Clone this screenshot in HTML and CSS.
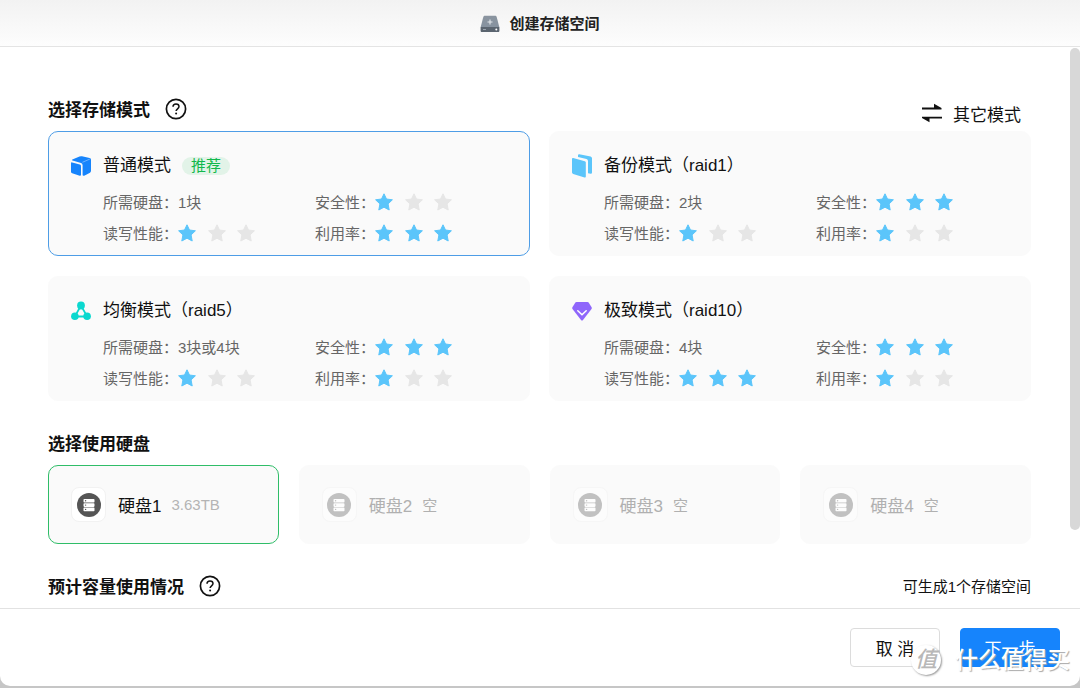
FILE: index.html
```html
<!DOCTYPE html>
<html lang="zh-CN">
<head>
<meta charset="utf-8">
<title>创建存储空间</title>
<link rel="stylesheet" href="styles.css">
</head>
<body>
<svg class="defs" aria-hidden="true">
  <symbol id="star" viewBox="0 0 18 18"><path d="M9 .8 11.5 6 17.4 6.8 13.1 10.9 14.2 17 9 14.200 3.800 17 4.900 10.900 .6 6.800 6.500 6Z" stroke="currentColor" stroke-width="1" stroke-linejoin="round" fill="currentColor"/></symbol>
  <symbol id="help" viewBox="0 0 22 22"><circle cx="11" cy="11" r="9.600" fill="none" stroke="#111" stroke-width="1.700"/><path d="M8 8.700C8 6.900 9.300 5.900 11 5.900s3 1.100 3 2.700c0 2.200-2.900 2.300-2.900 4.500" fill="none" stroke="#111" stroke-width="1.500"/><circle cx="11.100" cy="15.600" r="1" fill="#111"/></symbol>
  <symbol id="disk" viewBox="0 0 24 24"><circle cx="12" cy="12" r="12" fill="#555"/><g fill="#fff"><rect x="6.500" y="6" width="11" height="3.600" rx=".8"/><rect x="6.500" y="10.300" width="11" height="3.600" rx=".8"/><rect x="6.500" y="14.600" width="11" height="3.600" rx=".8"/></g><g fill="#555"><circle cx="8.600" cy="7.800" r=".7"/><circle cx="8.600" cy="12.100" r=".7"/><circle cx="8.600" cy="16.400" r=".7"/></g></symbol>
</svg>
<div class="window">
  <header class="titlebar">
    <svg class="title-icon" viewBox="0 0 20 18" aria-hidden="true">
      <defs><linearGradient id="metal" x1="0" y1="0" x2="0" y2="1"><stop offset="0" stop-color="#8a949f"/><stop offset="1" stop-color="#8793a0"/></linearGradient></defs>
      <path d="M5 .8h10c.9 0 1.400.4 1.700 1.200L19.300 12H.7L3.300 2C3.600 1.200 4.100.8 5 .8Z" fill="url(#metal)"/>
      <path d="M.6 12h18.800v3.800c0 .8-.5 1.300-1.300 1.300H1.900c-.8 0-1.300-.5-1.300-1.300Z" fill="#5b6570"/>
      <path d="M10 4.500v5M7.500 7h5" stroke="#e4e8ec" stroke-width="1.100"/>
      <path d="M3 14.500h3" stroke="#9aa3ad"/><circle cx="16.300" cy="14.500" r="1" fill="#fff"/>
    </svg>
    <h1>创建存储空间</h1>
  </header>

  <div class="viewport">
    <main class="content">
      <section>
        <div class="section-head">
          <h2>选择存储模式</h2>
          <button class="help" type="button" aria-label="存储模式说明"><svg><use href="#help"/></svg></button>
          <button class="other" type="button">
            <svg viewBox="0 0 22 20" aria-hidden="true"><path d="M1 4.600h12V.8l7.500 4.300v1.300H1ZM21 15.600H8.500v3.700L1 15.100v-1.300h20Z" fill="#111"/></svg>
            其它模式
          </button>
        </div>
        <div class="modes">
          <label class="card mode">
            <input class="pick" type="radio" name="mode" checked>
            <span class="mode-head">
              <svg class="mode-icon" viewBox="0 0 20 20" aria-hidden="true"><path d="M1.400 3.500 8.500.5Q9.700 0 11 .3L18.600 2Q20 2.400 20 3.700V14.800Q20 16 19 16.700L13.200 19.700Q11.600 20.300 11.600 18.700V9.300Q11.600 7.600 10 7L1.500 4.600Q.5 4.100 1.400 3.500Z" fill="#1684fc"/><path d="M1.200 6.400 8.800 8.600Q10 9 10 10.200V18.700Q10 20 8.700 19.700L1.200 17.300Q0 16.900 0 15.700V7.300Q0 6.100 1.200 6.400Z" fill="#1684fc"/><path d="M11.400 6.300 18.800 3.100" stroke="#7fbcff" stroke-width=".8"/></svg>
              <span class="mode-name">普通模式</span><span class="tag">推荐</span>
            </span>
            <span class="metrics">
              <span class="metric">所需硬盘：1块</span>
              <span class="metric">安全性：<span class="stars"><svg class="on"><use href="#star"/></svg><svg><use href="#star"/></svg><svg><use href="#star"/></svg></span></span>
              <span class="metric">读写性能：<span class="stars"><svg class="on"><use href="#star"/></svg><svg><use href="#star"/></svg><svg><use href="#star"/></svg></span></span>
              <span class="metric">利用率：<span class="stars"><svg class="on"><use href="#star"/></svg><svg class="on"><use href="#star"/></svg><svg class="on"><use href="#star"/></svg></span></span>
            </span>
          </label>
          <label class="card mode">
            <input class="pick" type="radio" name="mode">
            <span class="mode-head">
              <svg class="mode-icon tall" viewBox="0 0 20 24" aria-hidden="true"><g fill="#5bc5fa"><path d="M1.200 4 12.800 7.300Q13.800 7.600 13.800 8.600V22.500Q13.800 23.800 12.600 23.500L1.200 19.900Q0 19.500 0 18.500V5Q0 3.700 1.200 4Z"/><path d="M7.300.2 18.600 2.600Q20 3 20 4.300V18.500Q20 20 18.600 19.800L16 19.200V7Q16 5.500 14.500 5.100L6 3V1.200Q6.100 0 7.300.2Z"/></g></svg>
              <span class="mode-name">备份模式（raid1）</span>
            </span>
            <span class="metrics">
              <span class="metric">所需硬盘：2块</span>
              <span class="metric">安全性：<span class="stars"><svg class="on"><use href="#star"/></svg><svg class="on"><use href="#star"/></svg><svg class="on"><use href="#star"/></svg></span></span>
              <span class="metric">读写性能：<span class="stars"><svg class="on"><use href="#star"/></svg><svg><use href="#star"/></svg><svg><use href="#star"/></svg></span></span>
              <span class="metric">利用率：<span class="stars"><svg class="on"><use href="#star"/></svg><svg><use href="#star"/></svg><svg><use href="#star"/></svg></span></span>
            </span>
          </label>
          <label class="card mode">
            <input class="pick" type="radio" name="mode">
            <span class="mode-head">
              <svg class="mode-icon" viewBox="0 0 20 20" aria-hidden="true"><path d="M10 4.500 3.800 15.500H16.200Z" fill="none" stroke="#0bd8cf" stroke-width="1.800"/><g fill="#0bd8cf"><circle cx="10" cy="4.500" r="3.900"/><circle cx="3.900" cy="15.300" r="3.800"/><circle cx="16.100" cy="15.300" r="3.800"/></g></svg>
              <span class="mode-name">均衡模式（raid5）</span>
            </span>
            <span class="metrics">
              <span class="metric">所需硬盘：3块或4块</span>
              <span class="metric">安全性：<span class="stars"><svg class="on"><use href="#star"/></svg><svg class="on"><use href="#star"/></svg><svg class="on"><use href="#star"/></svg></span></span>
              <span class="metric">读写性能：<span class="stars"><svg class="on"><use href="#star"/></svg><svg><use href="#star"/></svg><svg><use href="#star"/></svg></span></span>
              <span class="metric">利用率：<span class="stars"><svg class="on"><use href="#star"/></svg><svg><use href="#star"/></svg><svg><use href="#star"/></svg></span></span>
            </span>
          </label>
          <label class="card mode">
            <input class="pick" type="radio" name="mode">
            <span class="mode-head">
              <svg class="mode-icon" viewBox="0 0 20 20" aria-hidden="true"><path d="M4.500 1h11q.8 0 1.300.7l2.800 4.600q.5.9-.1 1.700L11 19q-1 1.100-2 0L.5 8Q-.1 7.200.4 6.300L3.200 1.700Q3.700 1 4.500 1Z" fill="#8f66fb"/><path d="M5.800 9.700 10 13.700 14.200 9.700" fill="none" stroke="#fff" stroke-width="1.500" stroke-linecap="round"/></svg>
              <span class="mode-name">极致模式（raid10）</span>
            </span>
            <span class="metrics">
              <span class="metric">所需硬盘：4块</span>
              <span class="metric">安全性：<span class="stars"><svg class="on"><use href="#star"/></svg><svg class="on"><use href="#star"/></svg><svg class="on"><use href="#star"/></svg></span></span>
              <span class="metric">读写性能：<span class="stars"><svg class="on"><use href="#star"/></svg><svg class="on"><use href="#star"/></svg><svg class="on"><use href="#star"/></svg></span></span>
              <span class="metric">利用率：<span class="stars"><svg class="on"><use href="#star"/></svg><svg><use href="#star"/></svg><svg><use href="#star"/></svg></span></span>
            </span>
          </label>
        </div>
      </section>

      <section>
        <div class="section-head"><h2>选择使用硬盘</h2></div>
        <div class="disks">
          <label class="card disk"><input class="pick" type="checkbox" checked><span class="tile"><svg><use href="#disk"/></svg></span><span class="disk-name">硬盘1</span><span class="disk-size">3.63TB</span></label>
          <label class="card disk empty"><input class="pick" type="checkbox" disabled><span class="tile"><svg><use href="#disk"/></svg></span><span class="disk-name">硬盘2</span><span class="disk-size">空</span></label>
          <label class="card disk empty"><input class="pick" type="checkbox" disabled><span class="tile"><svg><use href="#disk"/></svg></span><span class="disk-name">硬盘3</span><span class="disk-size">空</span></label>
          <label class="card disk empty"><input class="pick" type="checkbox" disabled><span class="tile"><svg><use href="#disk"/></svg></span><span class="disk-name">硬盘4</span><span class="disk-size">空</span></label>
        </div>
      </section>

      <section>
        <div class="section-head">
          <h2>预计容量使用情况</h2>
          <button class="help" type="button" aria-label="容量说明"><svg><use href="#help"/></svg></button>
          <span class="note">可生成1个存储空间</span>
        </div>
      </section>
    </main>
    <div class="scrollbar"><div class="thumb"></div></div>
  </div>

  <footer class="actions">
    <button class="btn" type="button">取 消</button>
    <button class="btn primary" type="button">下一步</button>
  </footer>
  <div class="watermark"><span class="badge">值</span><span>什么值得买</span></div>
</div>
</body>
</html>
```
FILE: styles.css
```css
* { box-sizing: border-box; }

body {
  margin: 0;
  background: #c6c6c6;
  color: #111;
  font-family: "Liberation Sans", "Noto Sans CJK SC", sans-serif;
  font-size: 15px;
}

button {
  padding: 0;
  border: 0;
  background: none;
  color: inherit;
  font: inherit;
}

svg { display: block; flex: none; }
.defs { position: absolute; width: 0; height: 0; }

.window {
  position: relative;
  display: flex;
  flex-direction: column;
  height: calc(100vh - 2px);
  overflow: hidden;
  background: #fff;
  border-radius: 0 0 10px 10px;
}

.titlebar {
  display: flex;
  flex: none;
  align-items: center;
  justify-content: center;
  gap: 9px;
  height: 47px;
  padding-top: 1px;
  border-bottom: 1px solid #e4e4e4;
  background: linear-gradient(#f2f2f2, #fdfdfd);
}
.title-icon { width: 20px; height: 18px; }
h1 { margin: 0; font-size: 15px; line-height: 24px; color: #222; }

.viewport { display: flex; flex: 1; min-height: 0; }
.content {
  flex: 1;
  min-width: 0;
  padding: 48px 39px 0 48px;
  overflow: hidden;
}
.content section + section { margin-top: 28px; }
.scrollbar { flex: none; width: 10px; padding-top: 1px; }
.thumb { height: 86%; border-radius: 5px; background: #d8d8d8; }

.section-head { display: flex; height: 36px; align-items: flex-start; }
h2 { margin: 0; font-size: 17px; line-height: 31px; }
.help { margin: 3px 0 0 15px; }
.help svg { width: 22px; height: 22px; }
.other {
  display: flex;
  align-items: center;
  gap: 10px;
  height: 36px;
  margin-left: auto;
  margin-right: 10px;
  font-size: 17px;
}
.other svg { width: 22px; height: 20px; }
.note { margin-left: auto; line-height: 30px; }

.card { border: 1px solid #fafafa; border-radius: 10px; background: #fafafa; }
.pick { appearance: none; position: absolute; width: 0; height: 0; margin: 0; }

.modes { display: grid; grid-template-columns: 1fr 1fr; gap: 20px 19px; }
.mode { padding: 22px 22px 7px; }
.mode:has(:checked) { border-color: #4e9de6; }
.mode-head { display: flex; align-items: center; gap: 12px; height: 24px; }
.mode-icon { width: 20px; height: 20px; }
.mode-icon.tall { height: 24px; }
.mode-name { font-size: 17px; line-height: 24px; }
.tag {
  margin-left: -1px;
  padding: 0 9px;
  border-radius: 9px;
  background: #e2f3e8;
  color: #12b84c;
  line-height: 18px;
}
.metrics {
  display: grid;
  grid-template-columns: 212px 1fr;
  margin: 8px 0 0 32px;
  color: #666;
}
.metric { display: flex; align-items: center; height: 31px; }
.stars { display: flex; justify-content: space-between; width: 77px; color: #e6e6e6; }
.stars svg { width: 18px; height: 18px; }
.stars .on { color: #5bc5fa; }

.disks { display: grid; grid-template-columns: repeat(4, 1fr); gap: 20px; }
.disk { display: flex; align-items: center; padding: 21px 22px; }
.disk:has(:checked) { border-color: #2fbd68; }
.tile {
  display: grid;
  place-items: center;
  width: 35px;
  height: 35px;
  margin-right: 12px;
  border: 1px solid #f2f2f2;
  border-radius: 8px;
  background: #fff;
}
.tile svg { width: 24px; height: 24px; }
.disk-name { margin-right: 10px; font-size: 17px; }
.disk-size { color: #b4b4b4; }
.empty .tile { border-color: #f6f6f6; background: #fcfcfc; }
.empty .tile svg { opacity: 0.35; }
.empty .disk-name, .empty .disk-size { color: #b0b0b0; }

.actions {
  display: flex;
  flex: none;
  justify-content: flex-end;
  gap: 20px;
  padding: 19px 20px;
  border-top: 1px solid #e2e2e2;
}
.btn {
  width: 90px;
  height: 39px;
  border: 1px solid #dcdcdc;
  border-radius: 4px;
  background: #fff;
  font-size: 17px;
}
.btn.primary { width: 100px; border-color: #1684fc; background: #1684fc; color: #fff; }

.watermark {
  position: absolute;
  right: 10px;
  bottom: 8px;
  display: flex;
  align-items: center;
  gap: 14px;
  color: #fff;
  font-size: 23px;
  font-weight: 500;
  line-height: 36px;
  text-shadow: 1px 1px 1px #aaa;
  pointer-events: none;
}
.badge {
  width: 30px;
  height: 30px;
  border-radius: 50%;
  background: #fff;
  box-shadow: 1px 1px 2px #999;
  color: #b8b8b8;
  font-size: 22px;
  font-style: italic;
  line-height: 30px;
  text-align: center;
  text-shadow: none;
}
```
